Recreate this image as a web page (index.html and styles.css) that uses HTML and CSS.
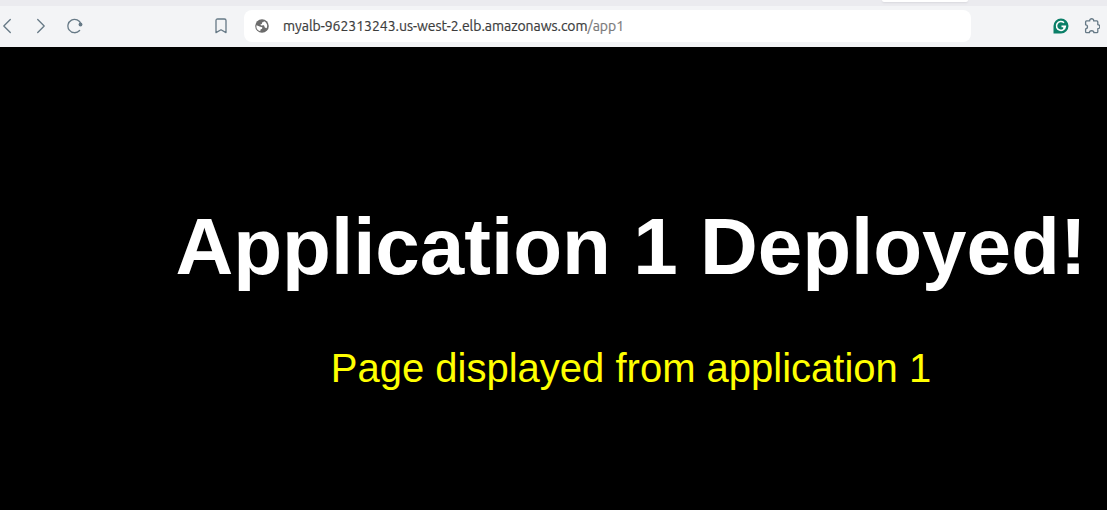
FILE: index.html
```html
<!DOCTYPE html>
<html lang="en">
<head>
<meta charset="utf-8">
<title>Application 1</title>
<link rel="stylesheet" href="styles.css">
</head>
<body>
<div class="tab-strip"><div class="active-tab"></div></div>
<header class="toolbar">
  <svg class="icon back" viewBox="0 0 16 16"><path d="M10.300 1.500 3.800 8l6.500 6.500"/></svg>
  <svg class="icon forward" viewBox="0 0 16 16"><path d="M4.700 1.500 11.200 8l-6.500 6.500"/></svg>
  <svg class="icon reload" viewBox="0 0 16 16"><path d="M12.600 12.500A6.700 6.700 0 1 1 14 6"/><circle class="dot" cx="13.500" cy="6.500" r="1.900"/></svg>
  <svg class="icon bookmark" viewBox="0 0 16 16"><path d="M3 14.600V2.600Q3 1 4.600 1h6.800Q13 1 13 2.600v12L8 11.800z"/></svg>
  <div class="address">
    <svg class="globe" viewBox="0 0 14 14"><circle cx="7" cy="7" r="6.800"/><path d="M1.500 6.200 5.300 7.700 7.300 8.200 7.100 9.700 5.500 10.400 5.300 12.300A5.500 5.500 0 0 1 1.500 6.200zM8.800 1.900 8.700 3 7 3.500 6.900 5 5.300 5.500 6.200 6.500 9 6.300 9.800 8.500 11.600 9.200A5.300 5.300 0 0 0 8.800 1.900z"/></svg>
    <span class="url">myalb-962313243.us-west-2.elb.amazonaws.com<span class="path">/app1</span></span>
  </div>
  <svg class="grammarly" viewBox="0 0 16 16"><path class="badge" d="M.5 15.500V8A7.500 7.500 0 1 1 8 15.500z"/><path class="letter" d="M11 4.800A4.400 4.400 0 1 0 12.300 8.400H8.500M10.500 10.500l1.800-2.100"/></svg>
  <svg class="icon extension" viewBox="0 0 16 16"><path d="M2.600 2.900H5.700C5.500 0 9.900 0 9.700 2.900h3.100q1 0 1 1v2.800c2.700-.1 2.700 4.100 0 4v3q0 1-1 1H9.900c0-2.600-4.500-2.600-4.500 0H2.600q-1 0-1-1V11c2.500-.1 2.500-4.200 0-4.200V3.900q0-1 1-1z"/></svg>
</header>
<main class="page">
  <h1 class="title">Application 1 Deployed!</h1>
  <p class="message">Page displayed from application 1</p>
</main>
</body>
</html>
```
FILE: styles.css
```css
* { box-sizing: border-box; }
body {
  margin: 0;
  height: 510px;
  display: flex;
  flex-direction: column;
  overflow: hidden;
  background: #000;
  font-family: "Liberation Sans", Arial, sans-serif;
}
.tab-strip { height: 6px; flex: none; background: #ebebef; }
.active-tab {
  width: 86px;
  height: 2px;
  margin-left: 882px;
  background: #fff;
  border-radius: 0 0 5px 5px;
  box-shadow: 0 1px 2px #d7d7dc;
}
.toolbar {
  height: 41px;
  flex: none;
  display: flex;
  align-items: center;
  padding-bottom: 1px;
  background: #f3f4f6;
}
.icon {
  width: 16px;
  height: 16px;
  flex: none;
  fill: none;
  stroke: #667986;
  stroke-width: 1.3;
  stroke-linecap: round;
  stroke-linejoin: round;
}
.forward { margin-left: 17px; }
.reload { margin-left: 18px; }
.dot { fill: #667986; stroke: none; }
.bookmark { margin-left: 130px; }
.address {
  width: 727px;
  height: 32px;
  margin-left: 15px;
  padding-left: 11px;
  display: flex;
  align-items: center;
  background: #fff;
  border-radius: 8px;
}
.globe { width: 14px; height: 14px; fill: #6b6b6b; }
.globe path { fill: #fff; }
.url {
  margin-left: 14px;
  font: 14px/18px Ubuntu, "Noto Sans", sans-serif;
  letter-spacing: -0.03px;
  -webkit-text-stroke: 0.2px currentColor;
  white-space: nowrap;
  color: #3c3c3c;
}
.path { color: #7b7b7b; }
.grammarly { width: 16px; height: 16px; margin-left: 82px; }
.badge { fill: #0b7f68; }
.letter { fill: none; stroke: #fff; stroke-width: 1.6; }
.extension { margin-left: 15px; }
.page {
  flex: 1;
  padding: 154px 0 0 155px;
  text-align: center;
  background: #000;
}
.title { margin: 0; font-size: 80px; line-height: 92px; color: #fff; }
.message { margin: 52px 0 0; font-size: 40px; line-height: 46px; color: #ff0; }
```
